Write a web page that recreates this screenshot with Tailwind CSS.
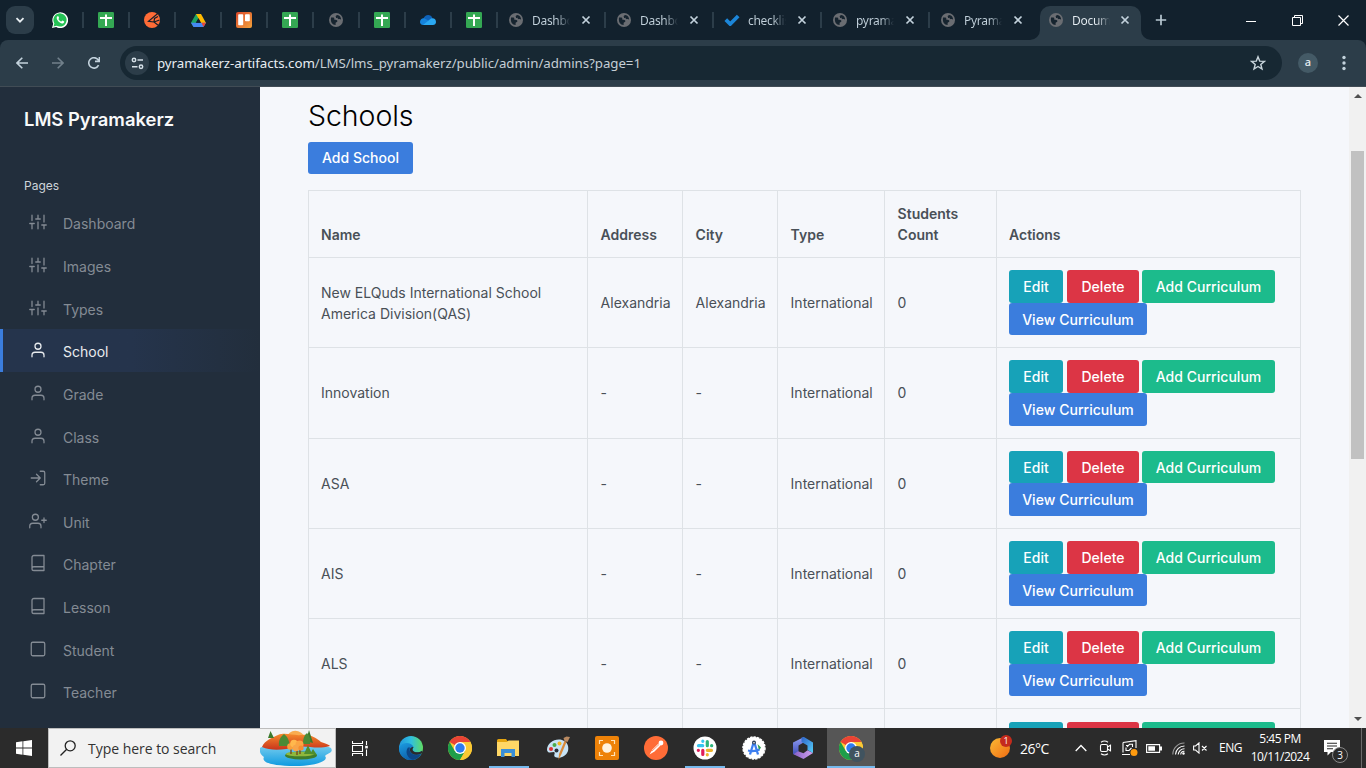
<!DOCTYPE html>
<html lang="en">
<head>
<meta charset="utf-8">
<title>Document</title>
<script src="https://cdn.jsdelivr.net/npm/@tailwindcss/browser@4"></script>
</head>
<body class="w-[1366px] h-[768px] overflow-hidden flex flex-col bg-[#f5f7fb] font-['Inter',sans-serif]">

<svg class="hidden">
  <symbol id="globe" viewBox="0 0 14 14"><circle cx="7" cy="7" r="7" fill="#6a6d72"/><path d="M2 4.6h2.4c.8 0 1.1.9.8 1.5-.4.7 1.4.9 2.2.9 1 0 1 .9.9 1.6-.2.9-1.600.6-1.700 1.600v1.900C3.300 12 1.300 9.300 2 4.600z" fill="#16242f"/><path d="M8.300 1.900c-.8.4-2 .9-1.600 1.900.4.9 1.600.3 1.800 1.300.2.900.900 1.300 1.700 1 .8-.4 1.300.5 1.900.4C12.200 4.200 10.700 2.200 8.300 1.900z" fill="#16242f"/></symbol>
  <symbol id="sheet" viewBox="0 0 16 16"><rect width="16" height="16" rx="1.200" fill="#34a853"/><path d="M2 6h12M8 2.500v11.500" stroke="#fff" stroke-width="2" fill="none"/></symbol>
  <symbol id="x" viewBox="0 0 10 10"><path d="M1.500 1.500l7 7M8.500 1.500l-7 7" stroke="#c3d2dc" stroke-width="1.700" fill="none"/></symbol>
  <symbol id="sliders" viewBox="0 0 24 24"><path d="M4 21v-7M4 10V3M12 21v-9M12 8V3M20 21v-5M20 12V3M1 14h6M9 8h6M17 16h6"/></symbol>
  <symbol id="user" viewBox="0 0 24 24"><path d="M20 21v-2a4 4 0 0 0-4-4H8a4 4 0 0 0-4 4v2"/><circle cx="12" cy="7" r="4"/></symbol>
  <symbol id="login" viewBox="0 0 24 24"><path d="M15 3h4a2 2 0 0 1 2 2v14a2 2 0 0 1-2 2h-4M10 17l5-5-5-5M15 12H3"/></symbol>
  <symbol id="userplus" viewBox="0 0 24 24"><path d="M16 21v-2a4 4 0 0 0-4-4H5a4 4 0 0 0-4 4v2M20 8v6M23 11h-6"/><circle cx="8.500" cy="7" r="4"/></symbol>
  <symbol id="book" viewBox="0 0 24 24"><path d="M4 19.500A2.500 2.500 0 0 1 6.500 17H20M6.500 2H20v20H6.500A2.500 2.500 0 0 1 4 19.500v-15A2.500 2.500 0 0 1 6.500 2z"/></symbol>
  <symbol id="square" viewBox="0 0 24 24"><rect x="3" y="3" width="18" height="18" rx="2"/></symbol>
  <symbol id="chrome" viewBox="0 0 24 24"><circle cx="12" cy="12" r="12" fill="#fcc934"/><path d="M12 12L1.600 6A12 12 0 0 1 22.400 6H12z" fill="#ea4335"/><path d="M1.600 6A12 12 0 0 0 12 24l5.200-9L12 12 6.800 15z" fill="#1e9e4a"/><path d="M12 6h10.400A12 12 0 0 1 12 24l5.200-9z" fill="#fcc934"/><circle cx="12" cy="12" r="6" fill="#fff"/><circle cx="12" cy="12" r="4.700" fill="#2f7bf0"/></symbol>
</svg>

<!-- Tab strip -->
<div class="h-10 shrink-0 bg-[#12212d] flex relative font-['Noto_Sans',sans-serif]">
  <div class="w-[37px] pl-1.5 pt-1.5"><div class="size-7 rounded-[9px] bg-[#2c3d49] flex items-center justify-center"><svg class="size-3" viewBox="0 0 12 12"><path d="M2.500 4.200L6 7.700l3.500-3.500" stroke="#e8eef2" stroke-width="1.800" fill="none"/></svg></div></div>
  <div id="pinned" class="flex"></div>
  <div id="tabs" class="flex"></div>
  <div class="w-[3px]"></div>
  <div class="w-[101px] mt-1.5 h-[34px] bg-[#2c3d49] rounded-t-[10px] relative flex items-center pl-[9px]">
    <svg class="absolute -left-[10px] bottom-0 size-[10px]" viewBox="0 0 10 10"><path d="M0 10A10 10 0 0 0 10 0V10z" fill="#2c3d49"/></svg>
    <svg class="absolute -right-[10px] bottom-0 size-[10px]" viewBox="0 0 10 10"><path d="M10 10A10 10 0 0 1 0 0V10z" fill="#2c3d49"/></svg>
    <svg class="size-3.5 mb-1.5"><use href="#globe"/></svg>
    <span class="ml-[9px] mb-[4px] w-[38px] overflow-hidden whitespace-nowrap text-[12px] tracking-[-0.3px] bg-gradient-to-r from-[#e6edf2] from-65% to-transparent bg-clip-text text-transparent">Document</span>
    <svg class="ml-[10px] mb-1.5 size-[10px]"><use href="#x"/></svg>
  </div>
  <div class="w-10 flex items-center justify-center"><svg class="size-3" viewBox="0 0 12 12"><path d="M6 .8v10.400M.8 6h10.400" stroke="#b8c8d2" stroke-width="1.700"/></svg></div>
  <div class="ml-auto flex">
    <div class="w-[46px] flex items-center justify-center"><div class="w-[10px] h-px bg-white mt-0.5"></div></div>
    <div class="w-[46px] flex items-center justify-center"><svg class="size-[11px]" viewBox="0 0 11 11" fill="none" stroke="#fff"><path d="M.5 2.500h8v8h-8zM2.500 2.500v-2h8v8h-2"/></svg></div>
    <div class="w-[46px] flex items-center justify-center"><svg class="size-[11px]" viewBox="0 0 11 11" fill="none" stroke="#fff" stroke-width="1.200"><path d="M.5.5l10 10M10.500.5l-10 10"/></svg></div>
  </div>
</div>

<!-- Toolbar -->
<div class="h-[47px] shrink-0 bg-[#12212d]">
  <div class="h-full bg-[#2c3d49] rounded-t-[8px] border-b border-[#414c55] flex items-center font-['Noto_Sans',sans-serif]">
    <svg class="ml-4 size-3" viewBox="0 0 12 12" fill="none" stroke="#c3d2dc" stroke-width="1.600"><path d="M12 6H1M6.300.7L1 6l5.300 5.300"/></svg>
    <svg class="ml-6 size-3" viewBox="0 0 12 12" fill="none" stroke="#71808b" stroke-width="1.600"><path d="M0 6h11M5.700.7L11 6l-5.300 5.300"/></svg>
    <svg class="ml-6 size-3" viewBox="0 0 12 12" fill="none" stroke="#c3d2dc" stroke-width="1.600"><path d="M10.600 8.200A5.200 5.200 0 1 1 9.900 2.500l1.300 1.500M11.400 0v4.400H7"/></svg>
    <div class="ml-5 w-[1162px] h-[34px] rounded-full bg-[#172833] flex items-center">
      <div class="ml-[5px] size-6 rounded-full bg-[#2c3d49] flex items-center justify-center"><svg class="size-[13px]" viewBox="0 0 13 13" fill="none" stroke="#d5e0e7" stroke-width="1.500"><circle cx="3" cy="3" r="1.700"/><path d="M6.500 3H12M1 9.700h5.500"/><circle cx="10" cy="9.700" r="1.700"/></svg></div>
      <span class="ml-2 text-[13.300px] leading-5 tracking-[-0.055px] whitespace-nowrap text-[#c5ced5]"><span class="text-[#e7edf2]">pyramakerz-artifacts.com</span>/LMS/lms_pyramakerz/public/admin/admins?page=1</span>
      <svg class="ml-auto mr-4 size-4" viewBox="0 0 16 16" fill="none" stroke="#c9d5dc" stroke-width="1.400"><path d="M8 1.800l1.700 4.300 4.700.3-3.600 3 1.200 4.600L8 11.500 4 14l1.200-4.600-3.600-3 4.700-.3z"/></svg>
    </div>
    <div class="ml-4 size-5 rounded-full bg-[#445a66] text-[#e6edf2] text-[11px] font-medium leading-[18px] text-center">a</div>
    <svg class="ml-6 w-1 h-4" viewBox="0 0 4 16" fill="#c3d2dc"><circle cx="2" cy="2.500" r="1.700"/><circle cx="2" cy="8" r="1.700"/><circle cx="2" cy="13.500" r="1.700"/></svg>
  </div>
</div>

<!-- Page -->
<div class="h-[641px] shrink-0 flex overflow-hidden">
  <nav class="w-[260px] bg-[#222e3c]">
    <div class="h-[87px] pl-6 pt-[19px] text-[18.400px] leading-[27px] font-semibold text-[#f8f9fa]">LMS Pyramakerz</div>
    <div class="h-[27px] pl-6 pt-[3px] text-[12px] leading-[18px] text-[#ced4da]">Pages</div>
    <div id="menu"></div>
  </nav>

  <main class="flex-1 pl-12 overflow-hidden">
    <h1 class="mt-[10px] h-[45px] text-[28.500px] leading-[38px] font-[350] tracking-[-0.05px] text-black">Schools</h1>
    <button class="block h-8 w-[105px] rounded-[3px] bg-[#3b7ddd] text-white text-[14px] font-[450] tracking-[0.040px] leading-8 text-center">Add School</button>
    <table class="mt-4 w-[993px] table-fixed border-collapse text-[14px] leading-[21px] text-[#495057]">
      <colgroup><col class="w-[279px]"><col class="w-[95px]"><col class="w-[95px]"><col class="w-[107px]"><col class="w-[112px]"><col class="w-[304px]"></colgroup>
      <thead>
        <tr class="h-[67px] text-left align-bottom">
          <th class="border border-[#dee2e6] p-3 font-semibold">Name</th>
          <th class="border border-[#dee2e6] p-3 pl-[12.600px] font-semibold">Address</th>
          <th class="border border-[#dee2e6] p-3 pl-[12.600px] font-semibold">City</th>
          <th class="border border-[#dee2e6] p-3 pl-[12.600px] font-semibold">Type</th>
          <th class="border border-[#dee2e6] p-3 pl-[12.600px] font-semibold">Students Count</th>
          <th class="border border-[#dee2e6] p-3 font-semibold">Actions</th>
        </tr>
      </thead>
      <tbody id="rows"></tbody>
    </table>
  </main>

  <div class="w-[17px] bg-[#f1f1f1] flex flex-col items-center">
    <svg class="mt-[7px] w-2 h-1" viewBox="0 0 8 4"><path d="M4 0l4 4H0z" fill="#505050"/></svg>
    <div class="mt-[53px] w-[13px] h-[308px] bg-[#c1c1c1]"></div>
    <svg class="mt-auto mb-[7px] w-2 h-1" viewBox="0 0 8 4"><path d="M4 4l4-4H0z" fill="#505050"/></svg>
  </div>
</div>

<!-- Taskbar -->
<div class="h-10 shrink-0 bg-[#2b2b2b] flex items-center font-['Open_Sans',sans-serif] text-white">
  <div class="w-12 flex justify-center"><svg class="size-4" viewBox="0 0 16 16" fill="#fff"><path d="M0 2.200l6.500-.9v6.300H0zM7.300 1.200L16 0v7.600H7.300zM0 8.400h6.500v6.300L0 13.800zM7.300 8.400H16V16l-8.700-1.200z"/></svg></div>
  <div class="w-[288px] h-10 bg-[#f2f2f2] border border-[#bdbdbd] flex items-center">
    <svg class="ml-[11px] size-4" viewBox="0 0 16 16" fill="none" stroke="#222" stroke-width="1.300"><circle cx="10.200" cy="5.800" r="5"/><path d="M6.700 9.300L.5 15.500"/></svg>
    <span class="ml-3 text-[14px] text-[#333] whitespace-nowrap tracking-[-0.030px]">Type here to search</span>
    <svg class="ml-auto mr-[3px] w-[72px] h-9" viewBox="0 0 72 36">
      <defs><linearGradient id="w" x2="0" y2="1"><stop offset="0" stop-color="#7fd0ef"/><stop offset="1" stop-color="#0f9be0"/></linearGradient><linearGradient id="h" x2="0" y2="1"><stop offset="0" stop-color="#f58a2c"/><stop offset="1" stop-color="#c9341c"/></linearGradient></defs>
      <path d="M0 18C6 13 62 12 71 18c3 5-4 5-6 8 4 4-6 10-30 10-24 0-34-4-31-9-3-2-5-5-4-9z" fill="url(#w)"/>
      <path d="M26 9c3-11 15-11 20 0z" fill="#f9ac50"/>
      <path d="M2 17C5 10 12 8 18 5c8-3 15 1 24 0 8-1 14 3 19 7 4 1 8 3 9 4-14 4-22-1-34 1-12 3-25 4-34 0z" fill="url(#h)"/>
      <path d="M8 8l2.500-7L14 8zM46 11l3-11 4 13z" fill="#3b7a2c"/>
      <path d="M19 16c-1-8 4-11 5-12 4 3 6 8 5 12zM43 14c0-8 3-10 4-11 3 3 4 7 3 11z" fill="#4b8a35"/>
      <ellipse cx="41" cy="25.500" rx="16" ry="4" fill="#3f7d2c"/><ellipse cx="40" cy="24" rx="14" ry="2.300" fill="#8fb83c"/>
      <path d="M31 24v-5M37 25v-6M40 24v-5" stroke="#7a4318" stroke-width="1.300"/>
      <circle cx="30.500" cy="16.500" r="3.300" fill="#f9a03a"/><circle cx="34" cy="13.500" r="3.800" fill="#ffb84d"/><circle cx="39.500" cy="14.500" r="4" fill="#fba543"/><circle cx="36" cy="18" r="3.300" fill="#f7a54a"/><circle cx="41" cy="18" r="2.600" fill="#f58f30"/>
      <path d="M44 24l4-9 4 9zM50 24l3-5 4 6z" fill="#4f8e2e"/>
    </svg>
  </div>
  <div class="w-[51px] h-10 flex items-center pl-4"><svg class="w-4 h-[15px]" viewBox="0 0 16 15" fill="none" stroke="#fff" stroke-width="1.100"><path d="M.5 0v2.500h10V0M.5 4.500h10v6H.500zM.5 15v-2.500h10V15M14.500 0v4M14.500 8.500V15"/><rect x="13.200" y="4.800" width="2.600" height="2.600" fill="#fff" stroke="none"/></svg></div>
  <div class="w-[49px] h-10 flex items-center"><svg class="size-6 ml-3" viewBox="0 0 24 24">
    <defs><linearGradient id="e1"><stop offset="0" stop-color="#2196dc"/><stop offset=".5" stop-color="#30bfe0"/><stop offset="1" stop-color="#5fdc62"/></linearGradient><linearGradient id="e2" x2=".6" y2="1"><stop offset="0" stop-color="#1b9de2"/><stop offset="1" stop-color="#0c59a4"/></linearGradient></defs>
    <circle cx="12" cy="12" r="12" fill="url(#e1)"/>
    <path d="M0 11.500C3 6 12 5.500 14.600 11c-1 1.500-1.500 2.500-.6 3.800 2 2.200 6.500 1.900 9 0 .4 1-1.500 5-3 6.200A12 12 0 0 1 0 11.500z" fill="url(#e2)"/>
    <path d="M9 11.500C5.500 16 8.500 22.500 14 23.800c3-.4 6-2.300 8-5.300-4 1.800-9.500.5-11-3-.6-1.500-.5-2.700 0-4z" fill="#0d4686"/>
    <path d="M14.600 11c-1 1.500-1.500 2.500-.6 3.800 2 2.200 6.500 1.900 9 0l1 2.200-3 1c-4 1.500-8.500.5-10-3-.5-2 .6-4.500 3.600-4z" fill="#2b2b2b"/></svg></div>
  <div class="w-[49px] h-10 flex items-center"><svg class="size-6 ml-3"><use href="#chrome"/></svg></div>
  <div class="w-[49px] h-10 flex flex-col"><svg class="mt-[11px] ml-3 w-[22px] h-[18px]" viewBox="0 0 22 18"><path d="M0 1.500Q0 0 1.500 0H9l1.500 2H22v15H0z" fill="#e5a50f"/><path d="M0 3h10l1.500-1.500H22V17H0z" fill="#ffd766"/><path d="M4 18v-8h14v8h-3.500v-4h-7v4z" fill="#3a8fd8"/></svg><div class="mt-auto ml-1 w-10 h-0.5 bg-[#76b9ed]"></div></div>
  <div class="w-[49px] h-10 flex items-center"><svg class="size-6 ml-3" viewBox="0 0 24 24"><path d="M1 14C1 7 9 2 16 4c6 2 7 7 6 11-2 6-9 8-13 6-2-2 1-4-1-5-3 0-6 2-7-2z" fill="#c7e3f5"/><circle cx="5" cy="13" r="2" fill="#d33"/><circle cx="8.500" cy="9" r="2" fill="#4aaa4a"/><circle cx="13.500" cy="7.500" r="2" fill="#f5b51e"/><circle cx="10.500" cy="14.500" r="2" fill="#2a2f38"/><path d="M12.500 24l.5-6 5.500-13 2 1-5 12z" fill="#d98a3a"/><path d="M18.500 5l-1-3 3-1.500L24 1l-2.500 5z" fill="#b98a62"/></svg></div>
  <div class="w-[49px] h-10 flex items-center"><svg class="size-6 ml-3" viewBox="0 0 24 24"><rect width="24" height="24" rx="2" fill="#ee8208"/><circle cx="12" cy="12" r="4.800" fill="#fff3df"/><path d="M4.500 8V4.500H8M16 4.500h3.500V8M19.500 16v3.500H16M8 19.500H4.500V16" fill="none" stroke="#ffe3b8" stroke-width="1.200"/></svg></div>
  <div class="w-[49px] h-10 flex items-center"><svg class="size-6 ml-3" viewBox="0 0 24 24"><circle cx="12" cy="12" r="12" fill="#ff6c37"/><path d="M5.500 18.500l3-5 6-6 2 2-6 6z" fill="#fff"/><circle cx="17" cy="7" r="2.400" fill="#fff"/><path d="M8 15l7-6.500" stroke="#ff6c37" stroke-width=".7"/></svg></div>
  <div class="w-[49px] h-10 flex flex-col"><svg class="mt-2 ml-3 size-6" viewBox="0 0 24 24"><circle cx="12" cy="12" r="11.500" fill="#fff"/><g stroke-width="3.200" stroke-linecap="round"><path d="M5.500 9.700h4.200M9.800 5.200v.1" stroke="#36c5f0"/><path d="M14.300 5.500V9.700M18.700 9.700h-.1" stroke="#2eb67d"/><path d="M14.300 14.300h4.200M14.300 18.700v.1" stroke="#ecb22e"/><path d="M9.800 14.300v4.200M5.300 14.300h.1" stroke="#e01e5a"/></g></svg><div class="mt-auto ml-1 w-10 h-0.5 bg-[#76b9ed]"></div></div>
  <div class="w-[49px] h-10 flex items-center"><svg class="size-6 ml-3" viewBox="0 0 24 24"><circle cx="12" cy="12" r="11" fill="#fff" stroke="#fff" stroke-width="1.500" stroke-dasharray="2.400 1"/><path d="M15.500 8l3.500 3.500-2 3z" fill="#2ea04f"/><path d="M11.500 7L8 18.500M12.500 7L16 18.500M6 14.500q6 1.500 11.500-1" stroke="#3d7ff0" stroke-width="2.300" fill="none"/><circle cx="12" cy="6.500" r="2" fill="#2d3f58"/><circle cx="12" cy="6.700" r=".8" fill="#fff"/></svg></div>
  <div class="w-12 h-10 flex items-center"><svg class="size-6 ml-3" viewBox="0 0 24 24"><defs><linearGradient id="m1" x2="0" y2="1"><stop offset="0" stop-color="#93a0f5"/><stop offset="1" stop-color="#3a49b5"/></linearGradient><linearGradient id="m2" x2="1"><stop offset="0" stop-color="#8860c8"/><stop offset="1" stop-color="#d1a3ee"/></linearGradient><linearGradient id="m3" x2="1" y2="1"><stop offset="0" stop-color="#2f62c9"/><stop offset="1" stop-color="#55d0fa"/></linearGradient></defs><path d="M13 1L2 6.500V18l5.500 2V9.500l5-3z" fill="url(#m1)"/><path d="M10.500 1.500L13 1l9 5.500V17l-5.500-3V9.500l-6-3.500z" fill="url(#m3)"/><path d="M2.500 18.300l4.500-3 5.500 2 4-3 5.500 2.700-9.500 6z" fill="url(#m2)"/></svg></div>
  <div class="w-12 h-10 bg-[#565656] flex flex-col relative"><svg class="mt-2 ml-3 size-6"><use href="#chrome"/></svg><div class="absolute left-[22px] top-[18px] size-4 rounded-full bg-[#40535f] text-[10px] leading-[14px] text-center">a</div><div class="mt-auto h-0.5 bg-[#76b9ed]"></div></div>

  <div class="ml-[115px] size-[22px] relative"><div class="size-5 mt-px rounded-full bg-gradient-to-br from-[#f9b934] to-[#ee6a12]"></div><div class="absolute left-[10px] top-[-2px] size-3 rounded-full bg-[#c42b1c] text-[9px] leading-[11px] text-center">1</div></div>
  <span class="ml-2 w-[52px] text-[14px] tracking-[-0.500px]">26°C</span>
  <svg class="ml-[3px] w-3 h-2" viewBox="0 0 12 8"><path d="M.7 7L6 1.500 11.300 7" stroke="#fff" stroke-width="1.300" fill="none"/></svg>
  <svg class="ml-3 w-[13px] h-4" viewBox="0 0 13 16" fill="none" stroke="#fff" stroke-width="1.100"><rect x="1.500" y="4.500" width="7" height="7" rx="1.500"/><path d="M8.500 7l3-1.800v5.600l-3-1.800M2 2.200q3.500-2.500 7 0M2 13.800q3.500 2.500 7 0"/></svg>
  <svg class="ml-[9px] w-[17px] h-4" viewBox="0 0 17 16" fill="none" stroke="#fff" stroke-width="1.100"><path d="M2 2.500L15 .6V8M9 14.500H1M2 2.500v10M5 5.500h2M11.500 7V4.300H8.500L6 7M5 7.500v3h3L10.500 8"/><circle cx="13" cy="12.500" r="3.500" fill="#ff9b0f" stroke="none"/></svg>
  <svg class="ml-2 w-4 h-[9px]" viewBox="0 0 16 9"><path d="M.6.6h13v7.800H.600z" fill="none" stroke="#fff" stroke-width="1.100"/><path d="M2.300 2.200h6.700v4.600H2.300zM14 2.500h2v4h-2z" fill="#fff"/></svg>
  <svg class="ml-2.5 size-[13px]" viewBox="0 0 13 13" fill="none" stroke="#fff" stroke-width="1.100"><path d="M.8 12.500A11.500 11.500 0 0 1 12.500 1" stroke="#999"/><path d="M3.500 12.500A9 9 0 0 1 12.500 4M6.200 12.500A6.300 6.300 0 0 1 12.500 6.800M8.700 12.500a3.600 3.600 0 0 1 3.800-3.200"/><circle cx="11.500" cy="11.500" r="1.200" fill="#fff" stroke="none"/></svg>
  <svg class="ml-2 w-[15px] h-3" viewBox="0 0 15 12" fill="none" stroke="#fff" stroke-width="1.100"><path d="M.6 4h2L6 .9v10.200L2.600 8h-2zM9 4l4.500 4.500M13.500 4L9 8.500"/></svg>
  <span class="ml-[11px] w-[26px] text-[12px] tracking-[-0.5px]">ENG</span>
  <div class="ml-[3px] w-[64px] text-[12px] leading-[18px] tracking-[-0.500px] text-center whitespace-nowrap">5:45 PM<br>10/11/2024</div>
  <div class="ml-3 w-6 h-7 relative"><svg class="mt-[6px] size-4" viewBox="0 0 16 16"><path d="M0 0h16v12H7l-3.500 3.500V12H0z" fill="#fff"/><path d="M3 3.200h10M3 6h10M3 8.800h6" stroke="#2b2b2b" stroke-width="1.100"/></svg><div class="absolute left-2 top-[13px] size-4 rounded-full bg-[#2b2b2b] border border-[#8a8a8a] text-[10px] leading-[14px] text-center">3</div></div>
  <div class="ml-auto mr-1 w-px h-10 bg-[#6a6a6a]"></div>
</div>

<script>
const icons = {
  whatsapp: '<svg class="size-4" viewBox="0 0 16 16"><path d="M0 16l1.200-4.200A7.900 7.900 0 1 1 4.200 15z" fill="#fff"/><path d="M1.500 14.500l.9-3A6.600 6.600 0 1 1 4.700 13.700z" fill="#25c255"/><path d="M5.300 4.200c-2.400 2.300 2.700 8.300 6 7 1.300-.8 1-1.600.6-1.900l-1.500-.7-1 1c-1.500-.4-2.600-1.600-3-2.700l.7-1-.7-1.700z" fill="#fff"/></svg>',
  sheet: '<svg class="size-4"><use href="#sheet"/></svg>',
  globe: '<svg class="size-3.5"><use href="#globe"/></svg>',
  fox: '<svg class="size-4" viewBox="0 0 16 16"><circle cx="8" cy="8" r="8" fill="#ff6c37"/><path d="M13.800 1.500L4.500 9.300l5.500.7 4.500 3.500M10 10l.5-3.500 3.500-2M10 10l5.500-2" fill="none" stroke="#16202a" stroke-width="1.200"/></svg>',
  drive: '<svg class="size-[15px]" viewBox="0 0 15 15"><path d="M5 1h5L5 9.500 2.500 14 0 9.800z" fill="#1da462"/><path d="M5 1h5l5 9h-5z" fill="#ffba00"/><path d="M0 9.800h15L12.500 14h-10z" fill="#4688f4"/><path d="M7.500 5.300L10 9.800H5z" fill="#12212d"/><path d="M10.500 9.800H15L12.500 14z" fill="#ea4335"/></svg>',
  trello: '<svg class="size-4" viewBox="0 0 16 16"><defs><linearGradient id="tr" x2="1" y2="1"><stop offset="0" stop-color="#d9482b"/><stop offset="1" stop-color="#f3a13a"/></linearGradient></defs><rect width="16" height="16" rx="2" fill="url(#tr)"/><rect x="2.200" y="2.200" width="5" height="11" rx=".8" fill="#fff"/><rect x="9" y="2.200" width="4.800" height="7" rx=".8" fill="#fff"/></svg>',
  cloud: '<svg class="w-4 h-2.5" viewBox="0 0 16 10"><path d="M3 4.500C5-1.500 11-1 12.500 3.200L8 7z" fill="#0f62b8"/><path d="M0 7c0-3 3-4.500 5-3.300L11 7l-4 3H3C1 10 0 8.500 0 7z" fill="#1583dc"/><path d="M3 10L11 3.500C14 2.500 16 4.500 16 7c0 2-1.500 3-3 3z" fill="#2aa8f2"/></svg>',
  check: '<svg class="w-4 h-3" viewBox="0 0 16 12"><path d="M1.800 5.700l4.400 4.300L14.200 2" fill="none" stroke="#1c86d8" stroke-width="3.800"/></svg>'
};
document.getElementById('pinned').innerHTML = ['whatsapp','sheet','fox','drive','trello','sheet','globe','sheet','cloud','sheet'].map(k =>
  `<div class="w-[46px] relative flex items-center justify-center">${icons[k]}<i class="absolute -right-px top-3 w-0.5 h-4 bg-[#2c3d49]"></i></div>`).join('');
document.getElementById('tabs').innerHTML = [['globe','Dashboard'],['globe','Dashboard'],['check','checklist'],['globe','pyramakerz'],['globe','Pyramakerz']].map(([k,t],i) =>
  `<div class="w-[108px] relative flex items-center"><div class="w-[35px] pl-[3px] flex justify-center">${icons[k]}</div><span class="w-[38px] mt-0.5 overflow-hidden whitespace-nowrap text-[12px] tracking-[-0.3px] bg-gradient-to-r from-[#c3d2dc] from-65% to-transparent bg-clip-text text-transparent">${t}</span><svg class="ml-[11px] size-[10px]"><use href="#x"/></svg>${i < 4 ? '<i class="absolute -right-px top-3 w-0.5 h-4 bg-[#2c3d49]"></i>' : ''}</div>`).join('');
document.getElementById('menu').innerHTML = [['sliders','Dashboard'],['sliders','Images'],['sliders','Types'],['user','School'],['user','Grade'],['user','Class'],['login','Theme'],['userplus','Unit'],['book','Chapter'],['book','Lesson'],['square','Student'],['square','Teacher']].map(([k,t]) => {
  const on = t === 'School';
  return `<div class="${on ? 'h-[42.650px] flex items-center border-l-[3px] border-[#3b7ddd] pl-[26px] bg-gradient-to-r from-[#25344c] from-50% to-[#222e3c] text-[#e9ecef]' : 'h-[42.650px] flex items-center pl-[29px] text-[#848b94]'}"><svg class="size-[18px]" fill="none" stroke="currentColor" stroke-width="1.700" stroke-linecap="round" stroke-linejoin="round"><use href="#${k}"/></svg><span class="ml-4 pt-[3px] text-[14px]">${t}</span></div>`;
}).join('');
document.getElementById('rows').innerHTML = [['New ELQuds International School America Division(QAS)','Alexandria','Alexandria'],['Innovation','-','-'],['ASA','-','-'],['AIS','-','-'],['ALS','-','-'],['','','']].map(([n,a,c]) =>
  `<tr class="h-[90.300px] align-middle"><td class="border border-[#dee2e6] p-3">${n}</td><td class="border border-[#dee2e6] p-3 pl-[12.600px] pr-0">${a}</td><td class="border border-[#dee2e6] p-3 pl-[12.600px] pr-0">${c}</td><td class="border border-[#dee2e6] p-3 pl-[12.600px] pr-0">${n ? 'International' : ''}</td><td class="border border-[#dee2e6] p-3 pl-[12.600px]">${n ? '0' : ''}</td><td class="border border-[#dee2e6] px-3 py-0"><div class="flex flex-wrap text-white font-[450] tracking-[0.040px] leading-[31.600px] text-center text-[14px] *:pt-px *:rounded-[3px]"><span class="w-[54px] mr-1 bg-[#17a2b8]">Edit</span><span class="w-[72px] mr-[3px] bg-[#dc3545]">Delete</span><span class="w-[133px] bg-[#1cbb8c]">Add Curriculum</span><span class="w-[138px] bg-[#3b7ddd]">View Curriculum</span></div></td></tr>`).join('');
</script>
</body>
</html>
